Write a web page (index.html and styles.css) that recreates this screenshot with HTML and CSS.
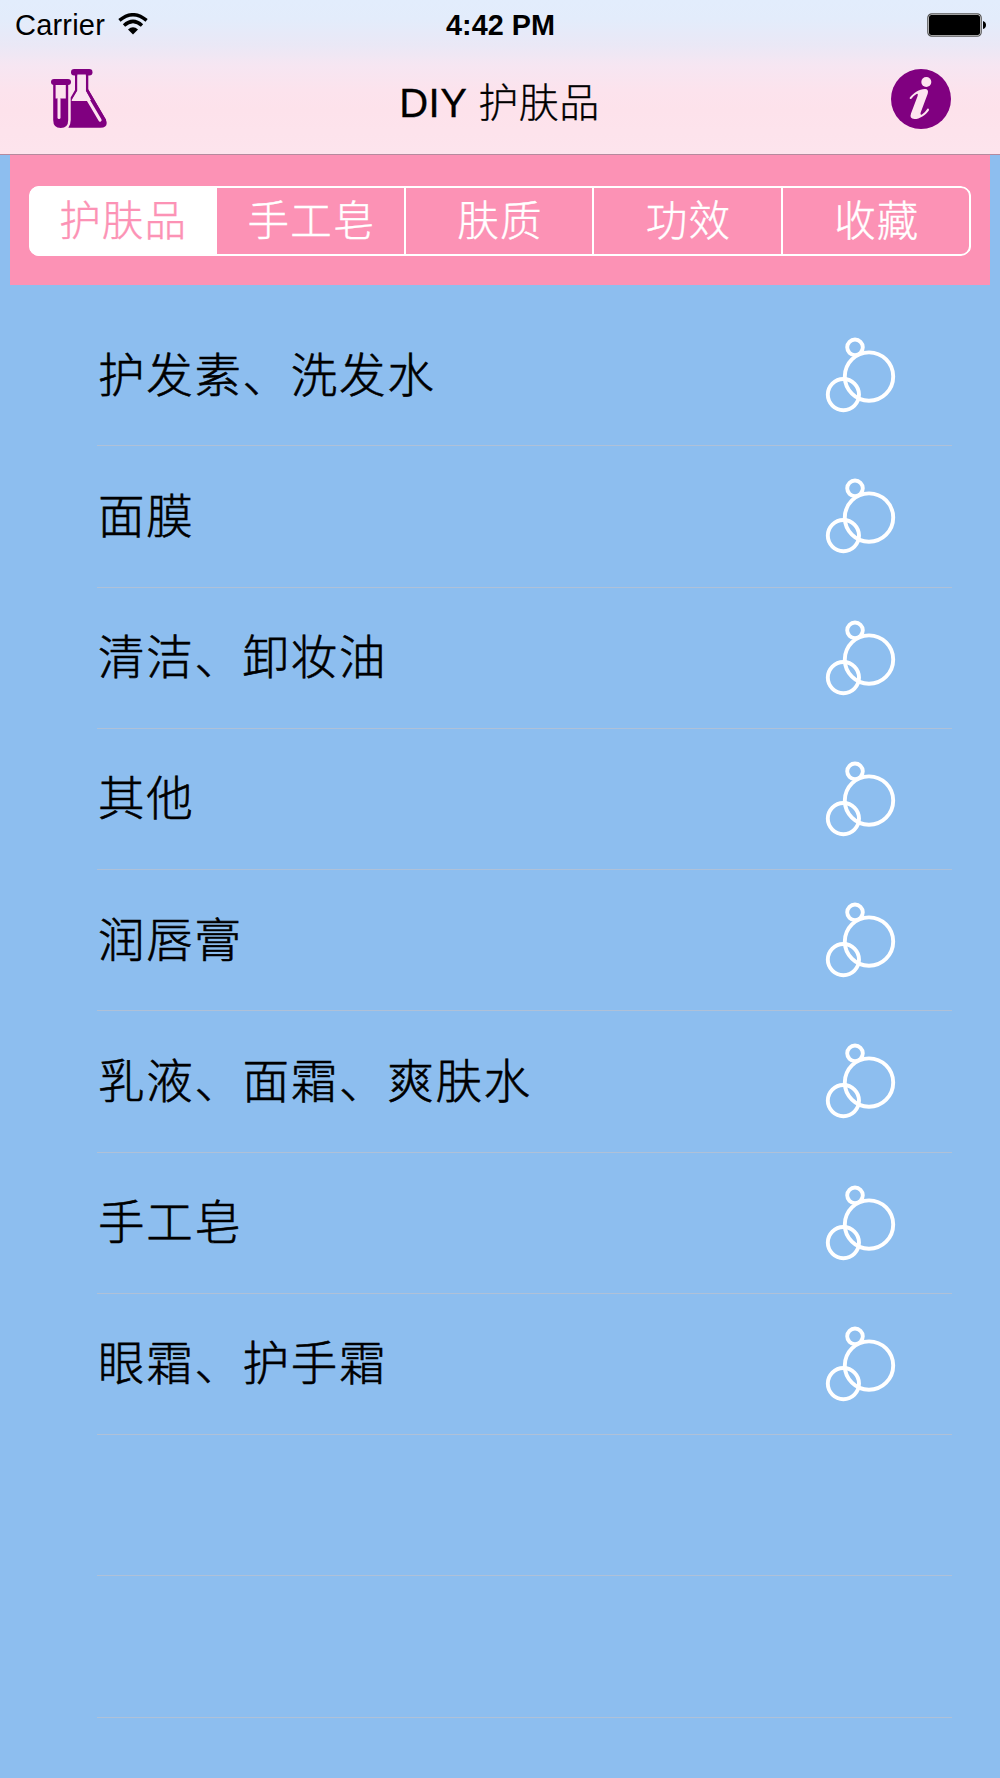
FILE: index.html
```html
<!DOCTYPE html>
<html lang="zh-CN">
<head>
<meta charset="utf-8">
<title>DIY 护肤品</title>
<link rel="stylesheet" href="styles.css">
</head>
<body>
<svg class="defs" width="0" height="0" aria-hidden="true">
  <symbol id="bubbles" viewBox="0 0 72 78">
    <g fill="none" stroke="#fff" stroke-width="3.9">
      <circle cx="44" cy="40.6" r="24.2"/>
      <circle cx="18.4" cy="58.6" r="15.6"/>
      <circle cx="30" cy="11.3" r="7.8"/>
    </g>
  </symbol>
</svg>
<header class="top">
  <div class="status">
    <div class="carrier">
      <span>Carrier</span>
      <svg class="wifi" width="30" height="22" viewBox="0 0 30 22">
        <g fill="none" stroke="#000" stroke-width="3.4">
          <path d="M1.4 7.4Q15-4 28.6 7.4"/>
          <path d="M6 12.4Q15 4.3 24 12.4"/>
        </g>
        <path d="M10 16.4Q15 12.2 20 16.4L15 21.6Z"/>
      </svg>
    </div>
    <div class="time">4:42 PM</div>
    <svg class="battery" width="60" height="24" viewBox="0 0 60 24">
      <rect x=".8" y=".8" width="53.4" height="22.4" rx="4" fill="#eee" stroke="#555" stroke-width="1.2"/>
      <rect x="2" y="2" width="51" height="20" rx="2.5"/>
      <path d="M56 8Q59 9 59 12T56 16Z"/>
    </svg>
  </div>
  <nav class="nav">
    <svg class="flask" width="56" height="60" viewBox="0 0 56 60">
      <g fill="#800080">
        <rect x="0" y="10" width="20" height="6" rx="3"/>
        <path d="M2.2 14V51Q2.2 59 9.7 59T17.2 51V14H14.8V29.5H4.6V14Z"/>
        <rect x="20" y="0" width="21.5" height="6.4" rx="3.2"/>
        <path d="M24 5H26.5V22L20.4 32H37.2L34.8 22V5H37.3V20.5L54.8 50.5Q58 58.5 49.5 58.8H17.4Q19.6 56 19.7 51V28.4L24 21Z"/>
      </g>
      <path d="M20.8 31L26.4 21.5V5.5H34.8V21.5L40 31Z" fill="#fae4f0"/>
      <g fill="none" stroke="#fde4ef" stroke-linecap="round">
        <path d="M8 30V48.5" stroke-width="3"/>
        <path d="M37.2 31L49 51" stroke-width="3.2"/>
      </g>
      <path d="M36 20.8L54 51.6" fill="none" stroke="#800080" stroke-width="2.6"/>
    </svg>
    <h1 class="title">DIY 护肤品</h1>
    <svg class="info" width="60" height="60" viewBox="0 0 60 60">
      <circle cx="30" cy="30" r="30" fill="#800080"/>
      <circle cx="35.3" cy="13" r="5" fill="#fde4ef"/>
      <path fill="#fde4ef" d="M18.8 28.6C23 23.5 28 20.3 34 20Q38 20.2 36.7 24.8L29.7 43.5Q28.8 46.4 31 45.4Q34 43.7 36.6 39.5Q38.2 39 38 41.2C34.7 46.2 28.5 50 23.5 50Q18.2 49.7 20 44.5L26.6 27Q27.5 24.3 25.5 25Q22.6 26.5 20.4 29.7Q18.2 30.6 18.8 28.6Z"/>
    </svg>
  </nav>
</header>
<main>
  <section class="filter">
    <div class="segments">
      <span class="segment active">护肤品</span>
      <span class="segment">手工皂</span>
      <span class="segment">肤质</span>
      <span class="segment">功效</span>
      <span class="segment">收藏</span>
    </div>
  </section>
  <ul class="list">
    <li class="row"><span>护发素、洗发水</span><svg class="bubbles"><use href="#bubbles"/></svg></li>
    <li class="row"><span>面膜</span><svg class="bubbles"><use href="#bubbles"/></svg></li>
    <li class="row"><span>清洁、卸妆油</span><svg class="bubbles"><use href="#bubbles"/></svg></li>
    <li class="row"><span>其他</span><svg class="bubbles"><use href="#bubbles"/></svg></li>
    <li class="row"><span>润唇膏</span><svg class="bubbles"><use href="#bubbles"/></svg></li>
    <li class="row"><span>乳液、面霜、爽肤水</span><svg class="bubbles"><use href="#bubbles"/></svg></li>
    <li class="row"><span>手工皂</span><svg class="bubbles"><use href="#bubbles"/></svg></li>
    <li class="row"><span>眼霜、护手霜</span><svg class="bubbles"><use href="#bubbles"/></svg></li>
    <li class="row"></li>
    <li class="row"></li>
  </ul>
</main>
</body>
</html>
```
FILE: styles.css
```css
* { box-sizing: border-box; }

body {
  margin: 0;
  height: 1778px;
  overflow: hidden;
  background: #8dbeef;
  color: #000;
  font-family: "Liberation Sans", "Noto Sans CJK SC", sans-serif;
  font-weight: 300;
}

.defs { display: block; }

.top {
  height: 155px;
  background: linear-gradient(#e2edfc 0, #e3ecfb 20px, #eae8f6 45px, #f6e6f2 65px, #fce3ed 90px, #fde2eb 110px, #fde4ed 100%);
  border-bottom: 1px solid #b58a9e;
}

.status {
  height: 50px;
  padding: 0 14px 0 15px;
  display: grid;
  grid-template-columns: 1fr auto 1fr;
  align-items: center;
  font-size: 29px;
}

.carrier { display: flex; align-items: center; gap: 13px; }
.carrier span { letter-spacing: .2px; padding-top: 1px; }
.wifi { margin-top: -2px; }
.time { padding-top: 1px; font-weight: 700; font-size: 28.8px; }
.battery { justify-self: end; margin-right: -1px; }

.nav {
  height: 104px;
  padding: 18.5px 49px 0 51px;
  display: grid;
  grid-template-columns: 1fr auto 1fr;
}

.title {
  margin: 5px 3px 0 0;
  font-size: 40px;
  font-weight: 300;
  line-height: 58px;
  letter-spacing: .5px;
  -webkit-text-stroke: .3px currentColor;
}

.info { justify-self: end; }

.filter {
  height: 130px;
  margin: 0 10px;
  padding: 31px 19px 0;
  background: #fc92b5;
}

.segments {
  position: relative;
  height: 70px;
  display: flex;
  border-radius: 10px;
  overflow: hidden;
}

/* Frame drawn over the segments so that they split the full width evenly. */
.segments::after {
  content: "";
  position: absolute;
  inset: 0;
  border: 2px solid #fff;
  border-radius: 10px;
}

.segment {
  flex: 1 1 0;
  min-width: 0;
  padding-top: 2px;
  display: flex;
  align-items: center;
  justify-content: center;
  box-shadow: inset -2px 0 #fff;
  color: #fff;
  font-size: 41.5px;
  line-height: 60px;
  letter-spacing: 1.2px;
  -webkit-text-stroke: .4px currentColor;
}

.segment.active { background: #fff; color: #fc92b5; }

.list {
  margin: 0;
  padding: 20px 48px 0 97px;
  list-style: none;
}

.row {
  height: 141.25px;
  padding: 0 55px 0 1px;
  display: flex;
  align-items: center;
  justify-content: space-between;
  border-bottom: 1px solid #afc1d8;
  font-size: 46.5px;
  letter-spacing: 1.7px;
}

.row span {
  padding-bottom: 8px;
  -webkit-text-stroke: .6px currentColor;
}

.bubbles { width: 72px; height: 78px; }
```
